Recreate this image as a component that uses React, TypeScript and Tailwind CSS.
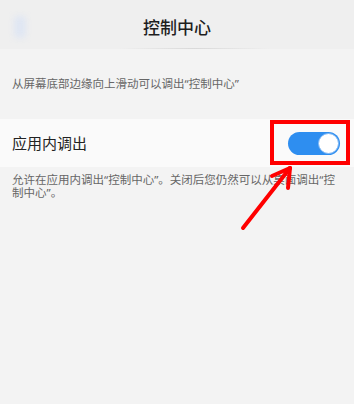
import React from "react";

export default function App() {
  return (
    <div
      className="relative w-[354px] h-[404px] overflow-hidden bg-[#f3f3f3]"
      style={{ fontFamily: '"Noto Sans", "Noto Sans CJK SC", sans-serif' }}
    >
      {/* header */}
      <div className="relative h-[49px] flex items-center justify-center bg-[#efefef] pt-[5px]">
        <div className="absolute left-[14px] top-[16px] w-[12px] h-[22px] rounded bg-[#dfe6f3] blur-[3px]" />
        <span className="text-[17px] leading-none text-[#1e1e1e] font-medium">控制中心</span>
        <div className="absolute left-[120px] bottom-0 w-[150px] h-px bg-gradient-to-r from-transparent via-[#d9d9d9] to-transparent" />
      </div>

      {/* subtitle */}
      <div className="h-[70px] px-[12px] pt-[28px]">
        <p className="text-[11.5px] leading-[14px] text-[#666]">从屏幕底部边缘向上滑动可以调出“控制中心”</p>
      </div>

      {/* row */}
      <div className="h-[48px] bg-[#fafafa] flex items-center justify-between pl-[12px] pr-[14px]">
        <span className="text-[15px] text-[#222]">应用内调出</span>
        <div className="w-[52px] h-[23px] rounded-full bg-[#2e8ef0] flex items-center justify-end pr-[1px]">
          <div className="w-[21px] h-[21px] rounded-full bg-white border border-[#7fb8f5]" />
        </div>
      </div>

      {/* description */}
      <div className="px-[12px] pt-[6px]">
        <p className="text-[11.5px] leading-[13px] text-[#666] w-[330px]">
          允许在应用内调出“控制中心”。关闭后您仍然可以从桌面调出“控制中心”。
        </p>
      </div>

      {/* red highlight box */}
      <div className="absolute left-[270px] top-[120px] w-[80px] h-[45px] border-[4px] border-[#ff0000]" />

      {/* red arrow */}
      <svg className="absolute left-0 top-0" width="354" height="404" viewBox="0 0 354 404">
        <g stroke="#ff0000" strokeWidth="4" strokeLinecap="round" strokeLinejoin="round" fill="none">
          <line x1="243" y1="228" x2="290" y2="168" />
          <line x1="290" y1="168" x2="272" y2="176" />
          <line x1="290" y1="168" x2="288" y2="188" />
        </g>
      </svg>
    </div>
  );
}
